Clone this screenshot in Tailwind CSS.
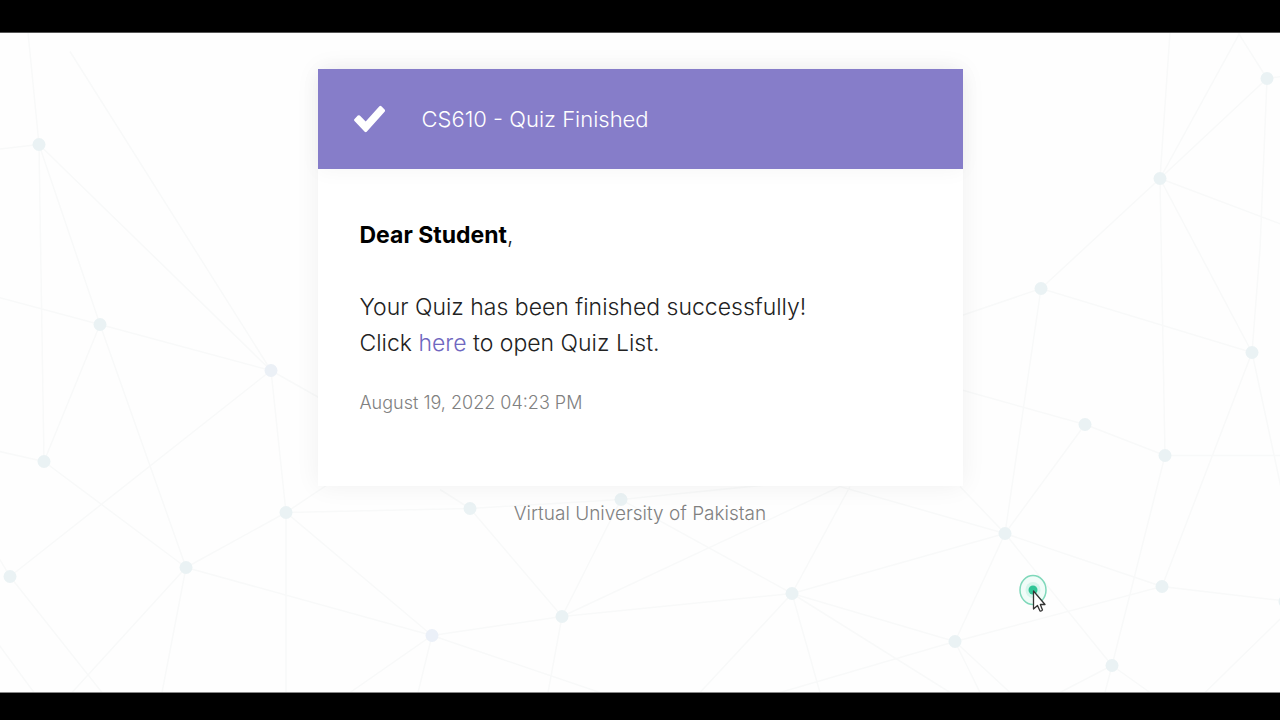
<!DOCTYPE html>
<html lang="en">
<head>
  <meta charset="utf-8" />
  <meta name="viewport" content="width=device-width, initial-scale=1" />
  <title>CS610 - Quiz Finished</title>
  <script src="https://cdn.jsdelivr.net/npm/@tailwindcss/browser@4"></script>
</head>

<body class="bg-black font-['Inter',sans-serif] font-light">
  <div class="flex flex-col min-h-screen">
    <div class="h-[33px] border-b border-[#555]"></div>

    <div class="relative flex-1 bg-[#fefefe] overflow-hidden">

      <!-- Particle network -->
      <svg class="absolute inset-0 w-full h-full" viewBox="0 33 1280 660" preserveAspectRatio="xMidYMid slice" aria-hidden="true">
        <g stroke="#f8f9f9" stroke-width="1.5" fill="none">
          <path d="M28 33L39 145L44 462M39 145L-5 150M39 145L100 325L186 568M39 145L271 371M70 52L271 371M-5 297L100 325L271 371L286 513V693M100 325L44 462L186 568M-5 451L44 462M271 371L10 577L-5 552M10 577L102 693M-5 640L34 693M186 568L72 693M186 568L162 693M186 568L286 513L432 636L186 568M271 371L340 410M286 513L350 470" />
          <path d="M286 513L470 509L621 500L820 480M470 509L440 490M470 509L562 617L621 500L792 594L562 617L432 636L350 693M432 636L418 693M432 636L600 693M562 617L548 693M562 617L840 487L1005 534L792 594L850 487M792 594L700 693M792 594L820 693M792 594L955 642L780 693M792 594L950 693" />
          <path d="M1267 79L1160 179L1041 289L1005 534L1085 425L1165 456L1290 456M1267 79L1238 33M1267 79L1260 250L1252 353L1041 289L950 320M1267 79L1290 76M1240 33L1160 179L1252 353L1162 587L1290 602M1160 179L1290 228M1160 179L1165 456L1112 666M1170 33L1160 179M1085 425L960 390M1252 353L1290 530M960 487L1005 534L1162 587L955 642L1005 534L1112 666L1060 693M1112 666L1150 693M1112 666L1105 693M955 642L980 693M955 642L1010 693M1290 610L1205 693" />
        </g>
        <g fill="#eaf2f4">
          <circle cx="39" cy="145" r="6.5" />
          <circle cx="100" cy="325" r="6.5" />
          <circle cx="271" cy="371" r="6.5" fill="#ebf0f6" />
          <circle cx="44" cy="462" r="6.5" />
          <circle cx="286" cy="513" r="6.5" />
          <circle cx="10" cy="577" r="6.5" />
          <circle cx="186" cy="568" r="6.5" />
          <circle cx="470" cy="509" r="6.5" />
          <circle cx="621" cy="500" r="6.5" />
          <circle cx="432" cy="636" r="6.5" fill="#ebf0f8" />
          <circle cx="562" cy="617" r="6.5" />
          <circle cx="792" cy="594" r="6.5" />
          <circle cx="955" cy="642" r="6.5" />
          <circle cx="1005" cy="534" r="6.5" />
          <circle cx="1085" cy="425" r="6.5" />
          <circle cx="1165" cy="456" r="6.5" />
          <circle cx="1162" cy="587" r="6.5" />
          <circle cx="1112" cy="666" r="6.5" />
          <circle cx="1041" cy="289" r="6.5" />
          <circle cx="1252" cy="353" r="6.5" />
          <circle cx="1160" cy="179" r="6.5" />
          <circle cx="1267" cy="79" r="6.5" />
          <circle cx="1285" cy="602" r="6.5" />
        </g>
      </svg>

      <main class="relative flex flex-col items-center pt-9">
        <section class="w-full max-w-[645px] bg-white shadow-[0_0_24px_rgba(0,0,0,0.06)]">
          <header class="flex items-center gap-9 h-[100px] px-9 bg-[#867dc9] text-white shadow-[0_2px_20px_rgba(0,0,0,0.04)]">
            <svg class="w-8 h-7" viewBox="0 0 32 28" fill="#fff" aria-hidden="true">
              <path d="M12.7 26.7Q11.7 27.6 10.7 26.7L.5 16Q-.4 15 .5 14L3.8 10.6Q4.8 9.7 5.8 10.6L11.7 16.5L25.4 1.2Q26.4 .2 27.4 1.2L30.6 4.6Q31.5 5.6 30.6 6.7Z" />
            </svg>
            <h1 class="text-[22px]">CS610 - Quiz Finished</h1>
          </header>

          <div class="px-[42px] pt-12 pb-[69px] text-[23px] leading-9 text-[#222]">
            <p class="mb-9"><b class="font-bold text-black">Dear Student</b>,</p>
            <p>Your Quiz has been finished successfully!</p>
            <p>Click <a href="#" class="text-[#6f67c0]">here</a> to open Quiz List.</p>
            <p class="mt-7 text-lg text-[#808080]">August 19, 2022 04:23 PM</p>
          </div>
        </section>

        <footer class="mt-3 text-[19px] leading-8 text-[#808080]">Virtual University of Pakistan</footer>
      </main>

      <!-- Click marker and pointer -->
      <svg class="absolute left-[1018px] top-[540px] w-8 h-10" viewBox="0 0 32 40" fill="none" aria-hidden="true">
        <ellipse cx="15" cy="17" rx="13" ry="14.5" fill="#f0fcf8" stroke="#7fd8ba" stroke-width="1.5" />
        <ellipse cx="15" cy="17" rx="7.5" ry="8" fill="#d5f5eb" />
        <circle cx="15" cy="17" r="4.5" fill="#2fc596" />
        <path d="M15.5 18V36L19.5 32.5L22 38Q23.5 38.5 24.5 37L22.3 31.5H27Z" fill="#fff" stroke="#333" stroke-width="1.3" stroke-linejoin="round" />
      </svg>
    </div>

    <div class="h-7 border-t border-[#888]"></div>
  </div>
</body>
</html>
